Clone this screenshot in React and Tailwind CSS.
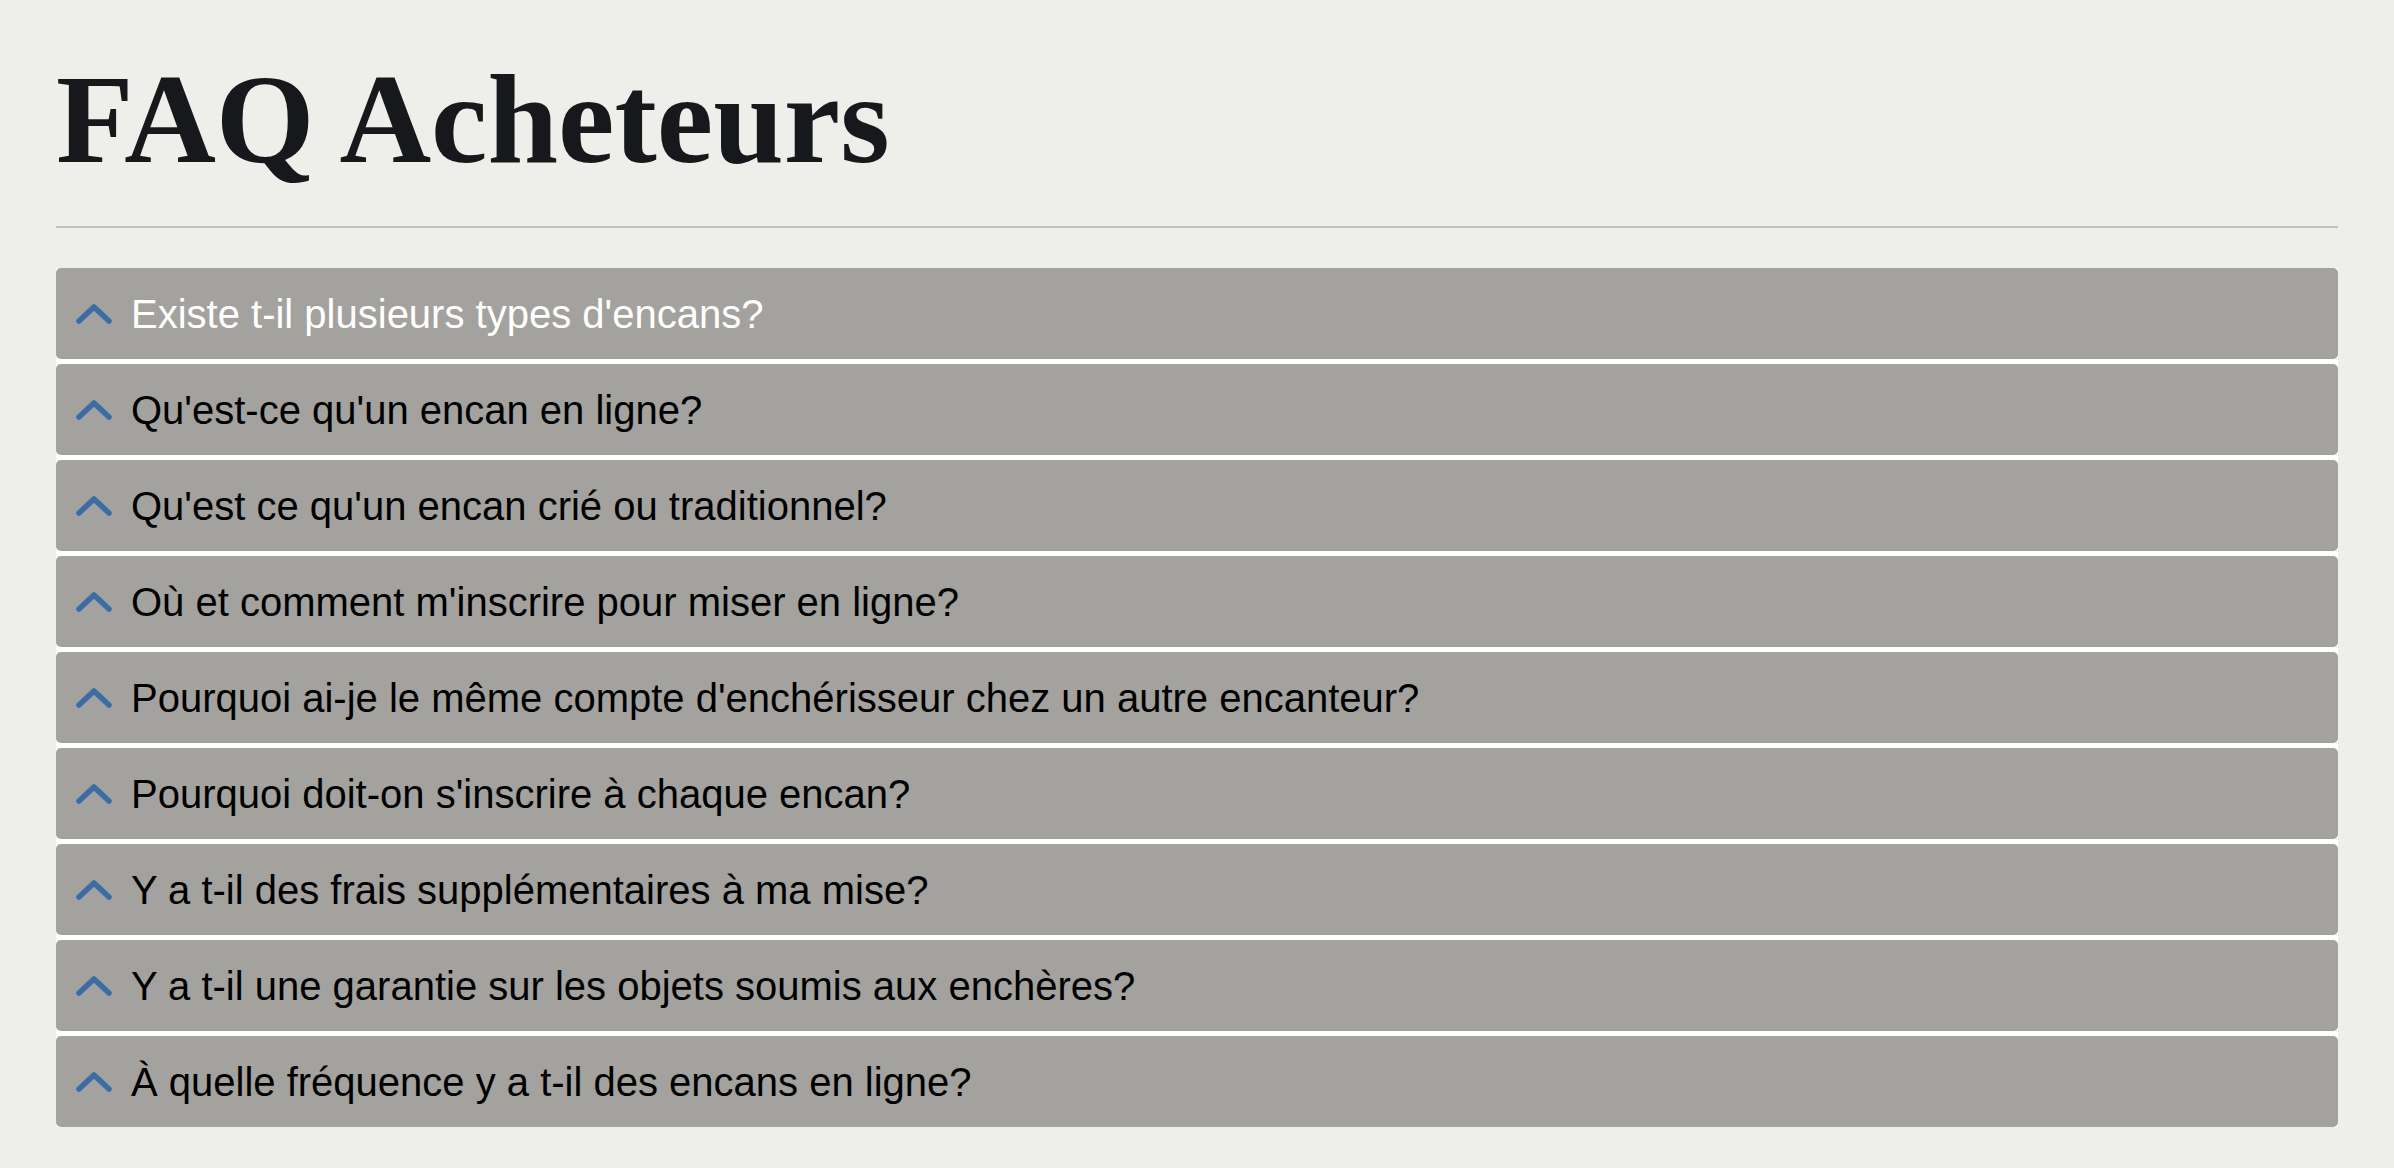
import React from "react"

const questions = [
  "Existe t-il plusieurs types d'encans?",
  "Qu'est-ce qu'un encan en ligne?",
  "Qu'est ce qu'un encan crié ou traditionnel?",
  "Où et comment m'inscrire pour miser en ligne?",
  "Pourquoi ai-je le même compte d'enchérisseur chez un autre encanteur?",
  "Pourquoi doit-on s'inscrire à chaque encan?",
  "Y a t-il des frais supplémentaires à ma mise?",
  "Y a t-il une garantie sur les objets soumis aux enchères?",
  "À quelle fréquence y a t-il des encans en ligne?",
]

const Chevron = () => (
  <svg width="36" height="22" viewBox="0 0 36 22" className="shrink-0">
    <polyline
      points="3,18 18,4 33,18"
      fill="none"
      stroke="#3c6ca8"
      strokeWidth="5.5"
      strokeLinecap="round"
      strokeLinejoin="round"
    />
  </svg>
)

const FaqRow = ({ text, active }) => (
  <button className="flex items-center h-[91px] w-full rounded-[5px] bg-[#a3a29e] pl-[75px] pr-6 text-left relative">
    <span className="absolute left-[20px] top-1/2 -translate-y-1/2 flex">
      <Chevron />
    </span>
    <span
      className={
        "text-[40px] leading-none font-['Liberation_Sans',Arial,sans-serif] " +
        (active ? "text-white" : "text-black")
      }
    >
      {text}
    </span>
  </button>
)

export default function App() {
  return (
    <div className="min-h-screen bg-[#eeefeb] px-[56px] pt-[56px] pb-[40px]">
      <h1 className="text-[127px] leading-none font-bold text-[#17181c] font-['Liberation_Serif','Times_New_Roman',serif]">
        FAQ Acheteurs
      </h1>
      <div className="mt-[43px] h-[2px] bg-[#c2bfbd]" />
      <div className="mt-[40px] flex flex-col gap-[5px] bg-white">
        {questions.map((q, i) => (
          <FaqRow key={q} text={q} active={i === 0} />
        ))}
      </div>
    </div>
  )
}
